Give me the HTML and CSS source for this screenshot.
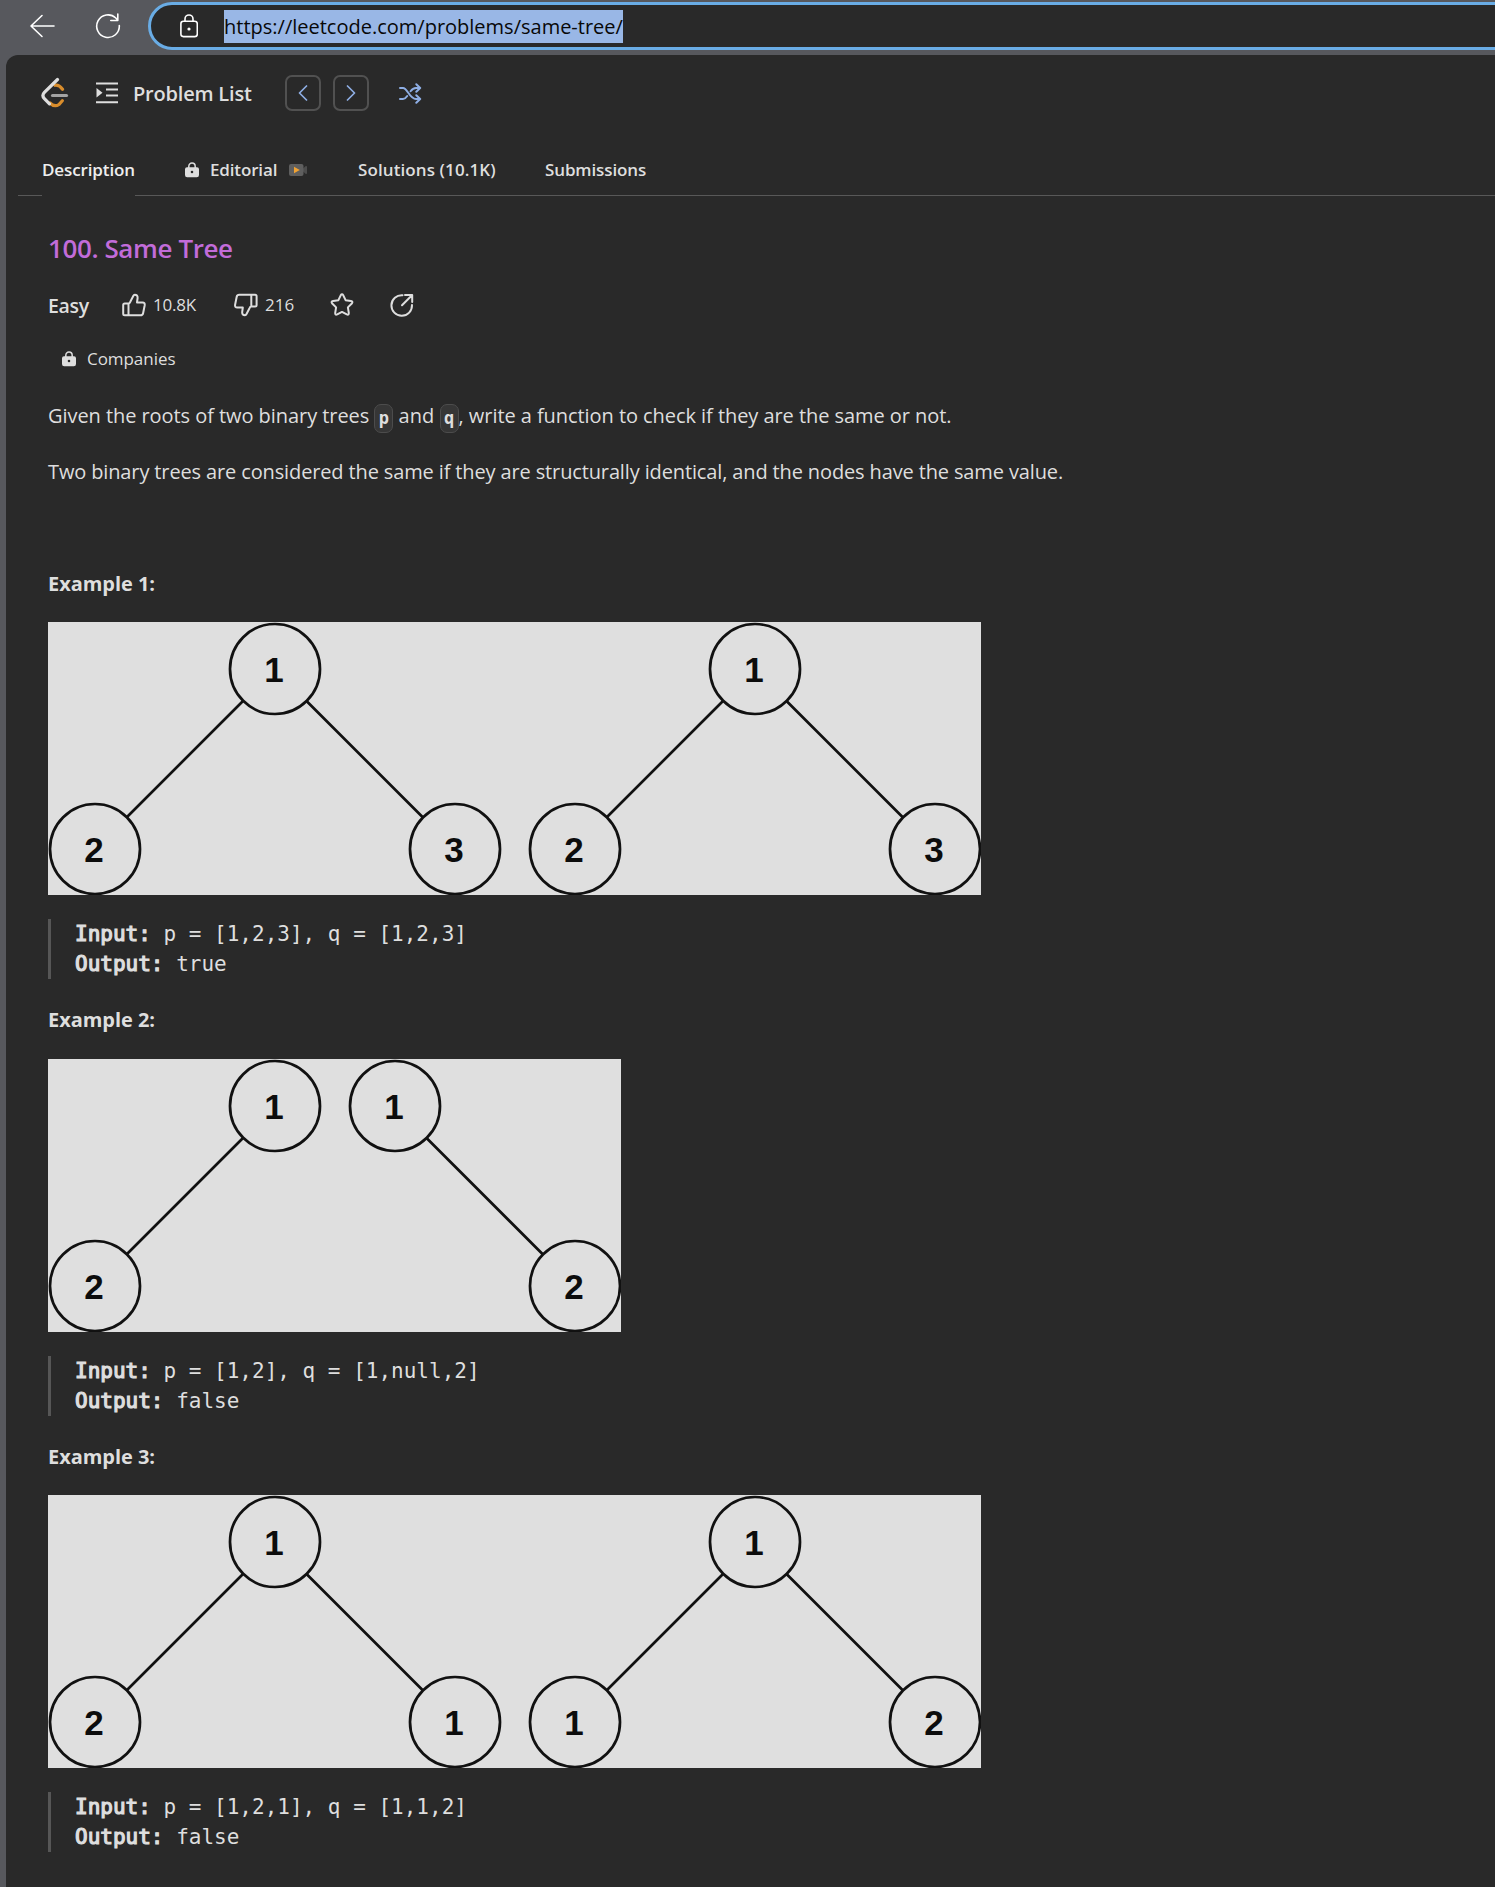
FILE: index.html
```html
<!DOCTYPE html>
<html lang="en">
<head>
<meta charset="utf-8">
<title>Same Tree - LeetCode</title>
<link rel="stylesheet" href="styles.css">
</head>
<body>
<svg class="defs" width="0" height="0">
  <symbol id="lock" viewBox="0 0 14 16"><path d="M3.8 7V4.4a3.2 3.4 0 0 1 6.4 0V7" fill="none" stroke="currentColor" stroke-width="1.5"/><path fill="currentColor" fill-rule="evenodd" d="M2 5.3h10a2 2 0 0 1 2 2V13a2.2 2.2 0 0 1-2.2 2.2H2.2A2.2 2.2 0 0 1 0 13V7.300a2 2 0 0 1 2-2zM7 8.700a1.300 1.300 0 1 0 0 2.600a1.300 1.300 0 0 0 0-2.600z"/></symbol>
</svg>
<header class="browser">
  <svg class="back" width="26" height="24" viewBox="0 0 26 24"><path d="M25 12H2M13 1.500 2 12l11 10.500"/></svg>
  <svg class="reload" width="26" height="26" viewBox="0 0 26 26"><path d="M24.300 12.500A11.300 11.300 0 1 1 20.800 5l2 2.200M22.800 1v6.500h-7"/></svg>
  <div class="address">
    <svg width="18" height="24" viewBox="0 0 18 24"><rect x=".9" y="7.200" width="16.400" height="15.400" rx="2.500"/><path d="M5 7V5a4 4 0 0 1 8 0v2"/><circle class="dot" cx="9" cy="15" r="1.600"/></svg>
    <span class="url">https://leetcode.com/problems/same-tree/</span>
  </div>
</header>
<main class="page">
  <nav class="toolbar">
    <svg class="logo" width="28" height="32" viewBox="0 0 28 32" fill="none" stroke-linecap="round" stroke-width="3.200"><path stroke="#d98d2c" d="M14 8.300q4-.8 7.500 4M9 26q4.500 4.500 9 1.500l3.300-3.700"/><path stroke="#a3a3a3" d="M11.500 18.500h14"/><path stroke="#dedede" d="M16.500 2.500 3.400 15.300q-3 3.200 0 6.400L8.500 26.800"/></svg>
    <svg class="list" width="22" height="22" viewBox="0 0 22 22"><path stroke="#dedede" stroke-width="2" d="M0 1.500h22M10 7.500h12M10 13.500h12M0 20.300h22"/><path fill="#dedede" d="M.5 6v9.500L6.500 10.700z"/></svg>
    <span class="plist">Problem List</span>
    <button class="nav prev"><svg width="10" height="16" viewBox="0 0 10 16"><path d="M8.500 1 1.500 8l7 7"/></svg></button>
    <button class="nav"><svg width="10" height="16" viewBox="0 0 10 16"><path d="m1.500 1 7 7-7 7"/></svg></button>
    <svg class="shuffle" width="23" height="21" viewBox="0 0 23 21"><path d="M1 5h3c4.500 0 6.500 11 13 11h4M1 16h3c1.800 0 3-1.200 4.200-3M11.600 8.300C13 6.300 14.500 5 17 5h4M17.300 1.300 21.200 5l-3.900 3.700M17.300 12.300l3.900 3.700-3.900 3.700"/></svg>
  </nav>
  <div class="tabs">
    <span class="tab active">Description</span>
    <span class="tab editorial"><svg class="lock" width="14" height="16"><use href="#lock"/></svg><span>Editorial</span>
      <svg class="cam" width="18" height="12" viewBox="0 0 18 12"><path fill="#4d4d4d" d="M14 4.500 16.800 2q1.200-.3 1.200 1v6q0 1.300-1.200 1L14 7.500z"/><rect width="14.500" height="12" rx="2" fill="#5f5f5f"/><path fill="#f0a233" d="M5 2.800v6.400L10.800 6z"/></svg></span>
    <span class="tab solutions">Solutions (10.1K)</span>
    <span class="tab submissions">Submissions</span>
  </div>
  <article class="problem">
    <h1>100. Same Tree</h1>
    <div class="meta">
      <span class="easy">Easy</span>
      <svg class="up" width="24" height="24" viewBox="0 0 24 24"><path d="M6.500 10.500H2.700q-1.500 0-1.500 1.500v8.700q0 1.500 1.500 1.500h15.800q2.200 0 2.600-2l1.600-8q.4-2.700-2.200-2.700H15l.6-4.500c.2-2.200-1-3.300-2.800-3.300q-1 0-1.400 1.100L8.300 8.800q-.7 1.700-1.800 1.700zM6.500 10.500v11.700"/></svg>
      <span class="count likes">10.8K</span>
      <svg class="down" width="24" height="24" viewBox="0 0 24 24"><path d="M17.300 13.500h3.800q1.500 0 1.500-1.500V3.300q0-1.500-1.500-1.500H5.300q-2.200 0-2.600 2l-1.600 8Q.7 14.500 3.300 14.500h5.500l-.6 4.500c-.2 2.200 1 3.300 2.800 3.300q1 0 1.400-1.100l3.100-6q.7-1.700 1.800-1.700zM17.300 13.500V1.800"/></svg>
      <span class="count dislikes">216</span>
      <svg class="star" width="24" height="24" viewBox="0 0 24 24"><path d="M10.700 2.300q1.300-2 2.600 0l2.300 4.900 5.300.8q2.500.6.900 2.500l-3.900 3.900.9 5.500q.2 2.500-2 1.500L12 18.900l-4.800 2.500q-2.200 1-2-1.500l.9-5.500-3.900-3.900Q.6 8.600 3.100 8l5.300-.8z"/></svg>
      <svg class="share" width="24" height="24" viewBox="0 0 24 24"><path d="M12.500 2.200A10.300 10.300 0 1 0 22 12M15 2h7.200v7M22 2.200 12 12.200"/></svg>
    </div>
    <div class="companies"><svg class="lock" width="14" height="16"><use href="#lock"/></svg><span>Companies</span></div>
    <p class="intro">Given the roots of two binary trees <code>p</code> <span class="and">and</span> <code>q</code>, write a function to check if they are the same or not.</p>
    <p class="same">Two binary trees are considered the same if they are structurally identical, and the nodes have the same value.</p>
    <p>&nbsp;</p>

    <h2>Example 1:</h2>
    <svg class="tree" width="933" height="273" viewBox="0 0 933 273">
      <path d="M195 79 78.500 195.500M258.500 79l116.500 116.500M675 79 558.500 195.500M738.500 79l116.500 116.500"/>
      <circle cx="227" cy="47" r="45"/><circle cx="47" cy="227" r="45"/><circle cx="407" cy="227" r="45"/><circle cx="707" cy="47" r="45"/><circle cx="527" cy="227" r="45"/><circle cx="887" cy="227" r="45"/>
      <text x="226" y="60">1</text><text x="46" y="240">2</text><text x="406" y="240">3</text><text x="706" y="60">1</text><text x="526" y="240">2</text><text x="886" y="240">3</text>
    </svg>
    <pre><b>Input:</b> p = [1,2,3], q = [1,2,3]
<b>Output:</b> true</pre>

    <h2 class="next">Example 2:</h2>
    <svg class="tree second" width="573" height="273" viewBox="0 0 573 273">
      <path d="M195 79 78.500 195.500M378.500 79l116.500 116.500"/>
      <circle cx="227" cy="47" r="45"/><circle cx="47" cy="227" r="45"/><circle cx="347" cy="47" r="45"/><circle cx="527" cy="227" r="45"/>
      <text x="226" y="60">1</text><text x="46" y="240">2</text><text x="346" y="60">1</text><text x="526" y="240">2</text>
    </svg>
    <pre><b>Input:</b> p = [1,2], q = [1,null,2]
<b>Output:</b> false</pre>

    <h2 class="next">Example 3:</h2>
    <svg class="tree" width="933" height="273" viewBox="0 0 933 273">
      <path d="M195 79 78.500 195.500M258.500 79l116.500 116.500M675 79 558.500 195.500M738.500 79l116.500 116.500"/>
      <circle cx="227" cy="47" r="45"/><circle cx="47" cy="227" r="45"/><circle cx="407" cy="227" r="45"/><circle cx="707" cy="47" r="45"/><circle cx="527" cy="227" r="45"/><circle cx="887" cy="227" r="45"/>
      <text x="226" y="60">1</text><text x="46" y="240">2</text><text x="406" y="240">1</text><text x="706" y="60">1</text><text x="526" y="240">1</text><text x="886" y="240">2</text>
    </svg>
    <pre><b>Input:</b> p = [1,2,1], q = [1,1,2]
<b>Output:</b> false</pre>
  </article>
</main>
</body>
</html>
```
FILE: styles.css
```css
* { box-sizing: border-box; }
html { background: #57585d; }
body {
  margin: 0;
  height: 1887px;
  overflow: hidden;
  display: flex;
  flex-direction: column;
  color: #dedede;
  font: 400 20px/30px "Open Sans", "Noto Sans", sans-serif;
}
svg { display: block; flex: none; }
.defs { display: none; }

/* browser bar */
.browser {
  flex: none;
  height: 55px;
  padding: 2px 0 5px 29px;
  display: flex;
  align-items: center;
}
.browser svg { fill: none; stroke: #fff; stroke-width: 1.6; stroke-linecap: round; stroke-linejoin: round; }
.reload { margin: 0 27px 0 40px; }
.address {
  flex: 1;
  height: 48px;
  margin-right: -4px;
  padding-left: 29px;
  display: flex;
  align-items: center;
  background: #292929;
  border: 3px solid #69ace5;
  border-radius: 24px 0 0 24px;
}
.browser .dot { fill: #fff; stroke: none; }
.url {
  margin: 1px 0 0 26px;
  height: 33px;
  line-height: 33px;
  background: #99b7e6;
  color: #080808;
}

/* page */
.page {
  flex: 1;
  margin-left: 6px;
  background: #292929;
  border-radius: 12px 0 0 0;
}
.toolbar {
  height: 76px;
  padding-left: 35px;
  display: flex;
  align-items: center;
}
.list { margin: 0 15px 0 27px; }
.plist { width: 120px; padding-top: 1px; margin-right: 32px; font-weight: 600; letter-spacing: -.2px; white-space: nowrap; }
.nav {
  width: 36px;
  height: 36px;
  margin: 0 12px 0 0;
  padding: 0;
  display: flex;
  align-items: center;
  justify-content: center;
  background: none;
  border: 2px solid #515151;
  border-radius: 7px;
}
.nav path, .shuffle path { fill: none; stroke: #8eaee4; stroke-width: 1.7; stroke-linecap: round; stroke-linejoin: round; }
.shuffle { margin-left: 18px; }
.shuffle path { stroke-width: 2; }

.tabs {
  height: 65px;
  margin-left: 12px;
  padding: 13px 0 0 24px;
  display: flex;
  border-bottom: 1px solid #585858;
  font-size: 17px;
  font-weight: 600;
  white-space: nowrap;
}
.tab { display: flex; align-items: center; height: 51px; letter-spacing: -.12px; }
.active { width: 93px; height: 52px; border-bottom: 1px solid #292929; color: #eee; }
.editorial { margin-left: 50px; width: 123px; letter-spacing: -.15px; }
.editorial span { width: 67px; margin: 0 12px 0 11px; }
.solutions { margin-left: 50px; width: 138px; letter-spacing: .1px; }
.submissions { margin-left: 49px; }

.problem { padding: 32px 0 0 42px; }
h1 { margin: 0; font-size: 26px; line-height: 40px; font-weight: 600; letter-spacing: -.4px; color: #c26cd9; }
.meta { height: 40px; margin-top: 17px; display: flex; align-items: center; }
.meta path { fill: none; stroke: #dedede; stroke-width: 2; stroke-linejoin: round; stroke-linecap: round; }
.easy { width: 42px; padding-top: 1px; font-size: 19.5px; font-weight: 600; letter-spacing: -.3px; }
.up { margin-left: 32px; }
.count { margin-left: 7px; font-size: 17px; letter-spacing: -.2px; }
.likes { width: 43px; }
.down { margin-left: 38px; }
.dislikes { width: 30px; letter-spacing: 0; }
.star { margin-left: 35px; }
.share { margin-left: 36px; }
.companies { height: 30px; margin-top: 19px; padding-left: 14px; display: flex; align-items: center; gap: 11px; font-size: 17px; letter-spacing: -.05px; }

p { margin: 26px 0 0; height: 30px; white-space: nowrap; }
.intro { margin-top: 27px; letter-spacing: -.06px; }
.and { letter-spacing: .1px; }
.same { letter-spacing: -.132px; }
code {
  display: inline-block;
  width: 19px;
  height: 29px;
  text-align: center;
  background: #363636;
  border: 1px solid #4c4c4c;
  border-radius: 7px;
  font: 700 17px/27px "DejaVu Sans Mono", monospace;
  vertical-align: -1px;
  margin: -9px 0;
}
h2 { margin: 26px 0 0; font-size: 20px; line-height: 30px; font-weight: 700; letter-spacing: -.04px; }
.next { margin-top: 26px; }
.tree { margin-top: 23px; background: #dfdfdf; }
.second { margin-top: 24px; }
.tree path, .tree circle { fill: none; stroke: #111; stroke-width: 2.7; }
.tree text { fill: #0c0c0c; font: 700 35px "Liberation Sans", Arial, sans-serif; text-anchor: middle; }
pre {
  margin: 24px 0 0;
  height: 60px;
  padding-left: 24px;
  border-left: 3px solid #565656;
  font: 21px/30px "DejaVu Sans Mono", monospace;
}
pre b { font-weight: 400; -webkit-text-stroke: 1.2px #dedede; }
```
